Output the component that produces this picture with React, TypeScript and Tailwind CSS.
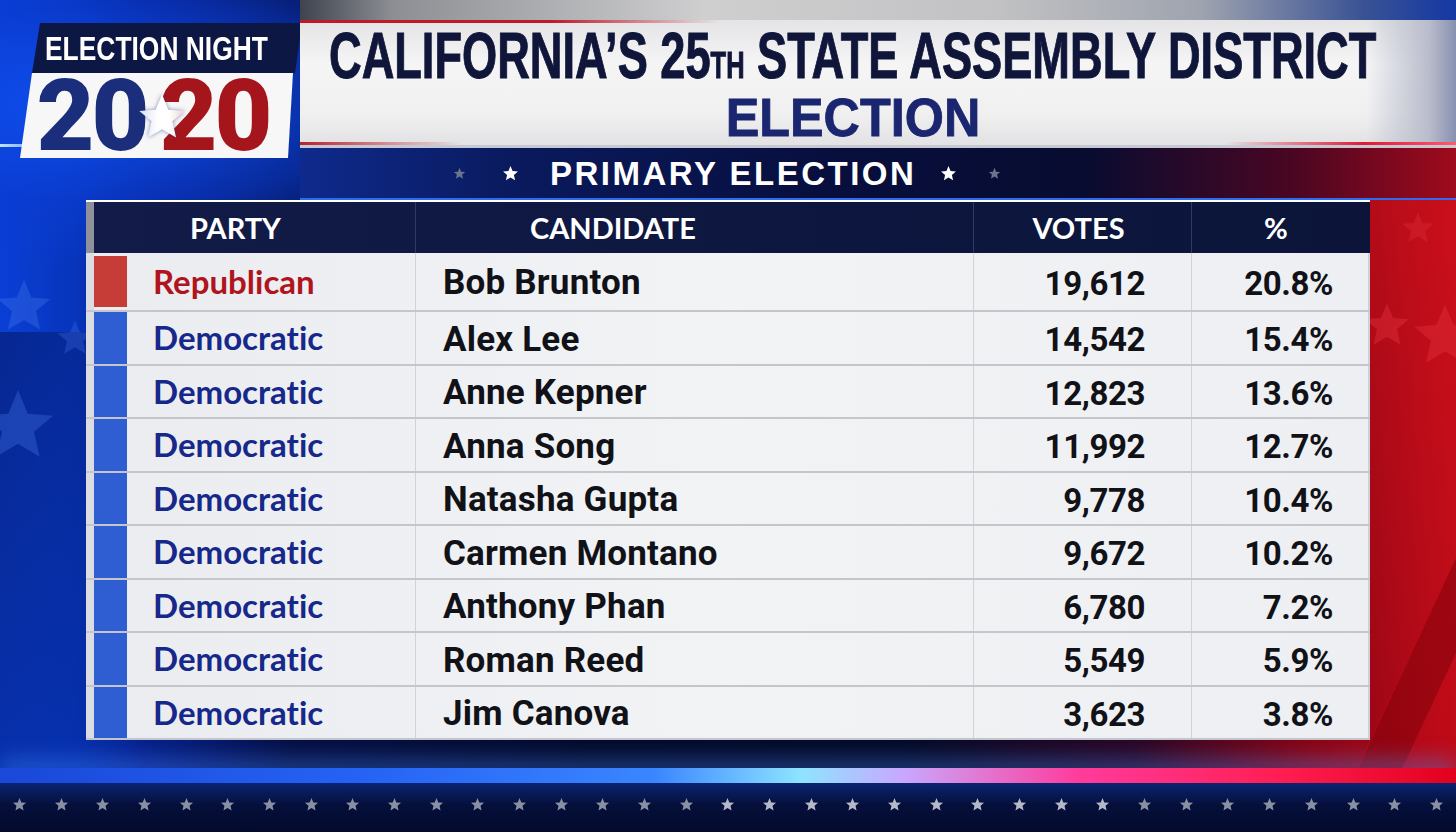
import React from "react";

type Row = {
  party: "Republican" | "Democratic";
  name: string;
  votes: string;
  pct: string;
};

const rows: Row[] = [
  { party: "Republican", name: "Bob Brunton", votes: "19,612", pct: "20.8%" },
  { party: "Democratic", name: "Alex Lee", votes: "14,542", pct: "15.4%" },
  { party: "Democratic", name: "Anne Kepner", votes: "12,823", pct: "13.6%" },
  { party: "Democratic", name: "Anna Song", votes: "11,992", pct: "12.7%" },
  { party: "Democratic", name: "Natasha Gupta", votes: "9,778", pct: "10.4%" },
  { party: "Democratic", name: "Carmen Montano", votes: "9,672", pct: "10.2%" },
  { party: "Democratic", name: "Anthony Phan", votes: "6,780", pct: "7.2%" },
  { party: "Democratic", name: "Roman Reed", votes: "5,549", pct: "5.9%" },
  { party: "Democratic", name: "Jim Canova", votes: "3,623", pct: "3.8%" },
];

const STAR =
  "12,1.5 14.9,8.6 22.5,9.2 16.8,14 18.5,21.5 12,17.6 5.5,21.5 7.2,14 1.5,9.2 9.1,8.6";

function Star({ className }: { className?: string }) {
  return (
    <svg viewBox="0 0 24 24" className={className} aria-hidden>
      <polygon points={STAR} fill="currentColor" />
    </svg>
  );
}

function Logo() {
  return (
    <div className="ml-[20px] mt-[23px] flex w-[282px] flex-col">
      <div className="ml-[12px] flex h-[50px] w-[270px] items-center bg-[#0c1743] pl-[13px] [clip-path:polygon(8px_0,100%_0,263px_100%,0_100%)]">
        <span className="origin-left scale-x-[0.8] whitespace-nowrap font-['Liberation_Sans',Arial,sans-serif] text-[33px] font-bold leading-none text-white">
          ELECTION NIGHT
        </span>
      </div>
      <div className="flex h-[85px] w-[276px] items-center justify-center bg-[#f7f7f8] pl-[2px] pr-[12px] [clip-path:polygon(12px_0,273px_0,268px_100%,0_100%)]">
        <div className="flex items-center font-['Roboto',sans-serif] text-[100px] font-black leading-[80px] tracking-[-3px]">
          <span className="text-[#1b2e7c]">20</span>
          <svg
            viewBox="0 0 24 24"
            className="relative z-10 -ml-[11px] -mr-[28px] mt-[2px] h-[52px] w-[52px] drop-shadow-[0_0_2px_rgba(40,50,120,0.55)]"
            aria-hidden
          >
            <defs>
              <linearGradient id="lgStar" x1="0" x2="1" y1="0" y2="0">
                <stop offset="0" stopColor="#d9def2" />
                <stop offset="0.4" stopColor="#ffffff" />
                <stop offset="0.65" stopColor="#ffffff" />
                <stop offset="1" stopColor="#f1d3d4" />
              </linearGradient>
            </defs>
            <polygon points={STAR} fill="url(#lgStar)" />
          </svg>
          <span className="text-[#a4161c]">20</span>
        </div>
      </div>
    </div>
  );
}

export default function App() {
  return (
    <div className="relative h-[832px] w-[1456px] overflow-hidden bg-[#040b2e]">
      {/* background */}
      <div className="absolute inset-0 bg-[linear-gradient(90deg,#0a3fd6_0%,#0735bc_5%,#07208a_10%,#050f44_20%,#040a2c_40%,#040a28_62%,#2a0624_78%,#8a0414_90%,#b80a18_100%)]" />
      <div className="absolute left-0 top-0 h-[260px] w-[520px] bg-[radial-gradient(ellipse_at_20%_40%,rgba(16,80,240,0.95),rgba(10,60,210,0.6)_45%,transparent_75%)]" />
      <div className="absolute bottom-0 left-0 h-[500px] w-[200px] bg-[linear-gradient(100deg,rgba(4,20,90,0.55),transparent_70%)]" />
      <div className="absolute right-0 top-[150px] h-[620px] w-[200px] bg-[linear-gradient(250deg,rgba(220,20,30,0.55),transparent_70%)]" />
      <div className="absolute right-[-60px] top-[380px] h-[500px] w-[90px] rotate-[25deg] bg-[#c40a16] opacity-40" />
      <div className="absolute right-[10px] top-[420px] h-[500px] w-[40px] rotate-[25deg] bg-[#6a0008] opacity-40" />
      <Star className="absolute left-[-6px] top-[276px] h-[60px] w-[60px] text-[#4d7ff0] opacity-30" />
      <Star className="absolute left-[-22px] top-[385px] h-[80px] w-[80px] text-[#4d7ff0] opacity-30" />
      <Star className="absolute left-[55px] top-[318px] h-[40px] w-[40px] text-[#4d7ff0] opacity-25" />
      <Star className="absolute left-[1362px] top-[300px] h-[50px] w-[50px] text-[#e0303a] opacity-45" />
      <Star className="absolute left-[1410px] top-[300px] h-[70px] w-[70px] text-[#e0303a] opacity-45" />
      <Star className="absolute left-[1400px] top-[210px] h-[36px] w-[36px] text-[#e0303a] opacity-35" />
      <div className="absolute left-0 top-[144px] h-[3px] w-[140px] bg-[linear-gradient(90deg,#bfe2ff,rgba(120,180,255,0.5)_40%,transparent)]" />

      {/* content */}
      <div className="relative flex h-full flex-col">
        <div className="flex h-[200px]">
          <div className="w-[300px] shrink-0">
            <Logo />
          </div>
          <div className="flex min-w-0 flex-1 flex-col">
            <div className="h-[20px] bg-[linear-gradient(90deg,#3e434e_0%,#8c8e93_8%,#cfcfd0_35%,#c2c2c4_60%,#9ea3ae_78%,#3a5294_92%,#1438a4_100%)]" />
            <div className="relative flex h-[125px] flex-col items-center bg-[linear-gradient(180deg,#e4e4e6,#f5f5f6_35%,#f0f0f1_75%,#e2e2e4)] pr-[50px] pt-[4px]">
              <div className="absolute left-0 top-0 h-[3px] w-[420px] bg-[linear-gradient(90deg,#c01a2a,#c01a2a_60%,transparent)]" />
              <div className="absolute right-0 top-0 h-full w-[90px] bg-[linear-gradient(90deg,transparent,#b9bccb_70%,#8790b0)]" />
              <div className="absolute bottom-0 left-0 h-[3px] w-full bg-[linear-gradient(90deg,#b8202c_0%,rgba(184,32,44,0.4)_8%,transparent_14%,transparent_80%,#e01a34_92%,#ff5a70_100%)]" />
              <div className="relative w-[1048px] whitespace-nowrap font-['Liberation_Sans',Arial,sans-serif] text-[64px] font-bold leading-[64px] text-[#10163a] [-webkit-text-stroke:1px_#10163a]">
                <span className="inline-block origin-left scale-x-[0.706]">
                  CALIFORNIA’S 25<span className="text-[36px]">TH</span> STATE ASSEMBLY DISTRICT
                </span>
              </div>
              <div className="relative -mt-[7px] scale-x-[0.95] whitespace-nowrap font-['Liberation_Sans',Arial,sans-serif] text-[53px] font-bold leading-[53px] text-[#1a2670] [-webkit-text-stroke:0.8px_#1a2670]">
                ELECTION
              </div>
            </div>
            <div className="flex h-[55px] items-center border-y-[3px] border-b-2 border-t-[#c6c9d4] border-b-[#2d6cf0] bg-[linear-gradient(90deg,#0e2a8c_0%,#0a1a5e_18%,#070f3e_45%,#080c30_68%,#4a0622_86%,#a00a1c_100%)] pl-[153px]">
              <Star className="h-[13px] w-[13px] text-[#6b7390]" />
              <Star className="ml-[36px] h-[17px] w-[17px] text-white" />
              <span className="ml-[31px] whitespace-nowrap font-['Liberation_Sans',Arial,sans-serif] text-[33px] font-bold leading-none tracking-[2.5px] text-white">
                PRIMARY ELECTION
              </span>
              <Star className="ml-[24px] h-[17px] w-[17px] text-white" />
              <Star className="ml-[31px] h-[13px] w-[13px] text-[#6b7390]" />
            </div>
          </div>
        </div>

        {/* table */}
        <div className="ml-[86px] flex w-[1284px] flex-col">
          <div className="flex h-[53px] border-t-2 border-white bg-[linear-gradient(90deg,#131c48,#0d163e_60%,#0c1539)] font-['Lato',sans-serif] text-[29px] font-bold text-white">
            <div className="w-[8px] shrink-0 bg-[#8e909a]" />
            <div className="flex w-[322px] shrink-0 items-center border-r border-[#2f3a68] pl-[96px]">PARTY</div>
            <div className="flex w-[558px] shrink-0 items-center border-r border-[#2f3a68] pl-[114px]">CANDIDATE</div>
            <div className="flex w-[218px] shrink-0 items-center justify-center border-r border-[#2f3a68] pr-[8px]">VOTES</div>
            <div className="flex w-[178px] shrink-0 items-center justify-center pr-[10px]">%</div>
          </div>
          {rows.map((r, i) => {
            const rep = r.party === "Republican";
            return (
              <div
                key={r.name}
                className={`flex border-b-2 border-[#c4c6cc] bg-[linear-gradient(90deg,#ebecf0,#f2f3f5_50%,#eeeff2)] ${i === 0 ? "h-[59px]" : "h-[53.5px]"}`}
              >
                <div className="w-[8px] shrink-0 bg-[#dcdde3]" />
                <div className="flex w-[322px] shrink-0 border-r border-[#d2d3d9]">
                  <div className={`w-[33px] shrink-0 ${rep ? "my-[3px] bg-[#c63c37]" : "bg-[#2f5ed3]"}`} />
                  <div
                    className={`flex items-center pl-[26px] font-['Lato',sans-serif] text-[33px] font-bold [font-variant-ligatures:none] ${rep ? "text-[#b0141d]" : "text-[#16298a]"}`}
                  >
                    {r.party}
                  </div>
                </div>
                <div className="flex w-[558px] shrink-0 items-center border-r border-[#d2d3d9] pl-[27px] pt-[4px] font-['Roboto',sans-serif] text-[35px] font-bold tracking-[0.2px] text-[#111217]">
                  {r.name}
                </div>
                <div className="flex w-[218px] shrink-0 items-center justify-end border-r border-[#d2d3d9] pr-[46px] pt-[4px] font-['Roboto',sans-serif] text-[33px] font-bold tracking-[-0.4px] text-[#111217]">
                  {r.votes}
                </div>
                <div className="flex w-[178px] shrink-0 items-center justify-end border-r-2 border-[#cfd0d6] pr-[35px] pt-[4px] font-['Roboto',sans-serif] text-[33px] font-bold tracking-[-0.4px] text-[#111217]">
                  {r.pct}
                </div>
              </div>
            );
          })}
        </div>

        {/* bottom */}
        <div className="h-[28px]" />
        <div className="h-[15px] bg-[linear-gradient(90deg,#1a48d8_0%,#2563f4_25%,#3a86ff_45%,#8ee4ff_55%,#c8a8ff_62%,#ff3c9c_74%,#ff1d52_88%,#e2001e_100%)] shadow-[0_-6px_22px_rgba(70,140,255,0.55)]" />
        <div className="flex flex-1 items-center justify-between bg-[linear-gradient(180deg,#0a2472,#050f3a_45%,#030a2c)] px-[12px] pb-[6px]">
          {Array.from({ length: 35 }).map((_, i) => (
            <Star
              key={i}
              className={`h-[15px] w-[15px] ${i > 16 && i < 27 ? "text-[#b4b9c8]" : "text-[#8a90a4]"}`}
            />
          ))}
        </div>
      </div>
    </div>
  );
}
